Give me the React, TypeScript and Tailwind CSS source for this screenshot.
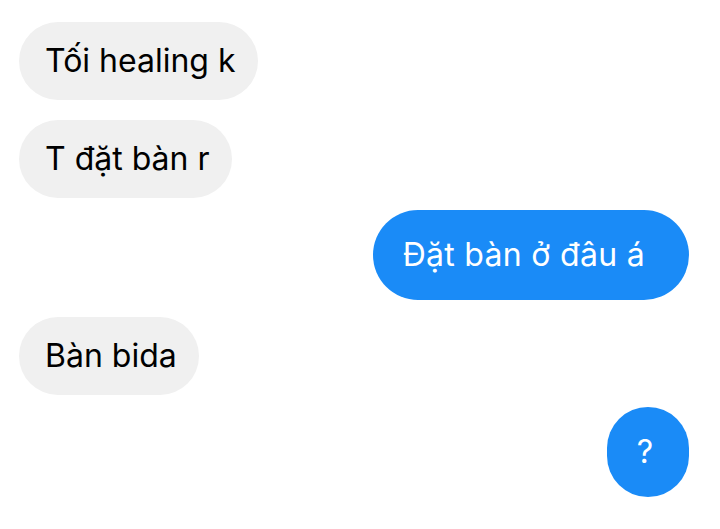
export default function App() {
  const font = { fontFamily: '"Inter", "Liberation Sans", sans-serif' };
  return (
    <div className="w-[720px] h-[529px] bg-white flex flex-col pt-[22px] pl-[19px] pr-[31px] overflow-hidden" style={font}>
      <div className="self-start h-[78px] rounded-full bg-[#f0f0f0] pl-[26px] pr-[22px] flex items-center text-[32px] text-black">
        Tối healing k
      </div>
      <div className="self-start mt-[20px] h-[78px] rounded-full bg-[#f0f0f0] pl-[26px] pr-[22px] flex items-center text-[32px] text-black">
        T đặt bàn r
      </div>
      <div className="self-end mt-[12px] h-[90px] rounded-full bg-[#1a8bf7] pl-[30px] pr-[44px] flex items-center text-[32px] tracking-[0.3px] text-white">
        Đặt bàn ở đâu á
      </div>
      <div className="self-start mt-[17px] h-[78px] rounded-full bg-[#f0f0f0] pl-[26px] pr-[22px] flex items-center text-[32px] text-black">
        Bàn bida
      </div>
      <div className="self-end mt-[12px] h-[90px] w-[82px] rounded-full bg-[#1a8bf7] flex items-center justify-center pr-[6px] text-[32px] text-white">
        ?
      </div>
    </div>
  );
}
